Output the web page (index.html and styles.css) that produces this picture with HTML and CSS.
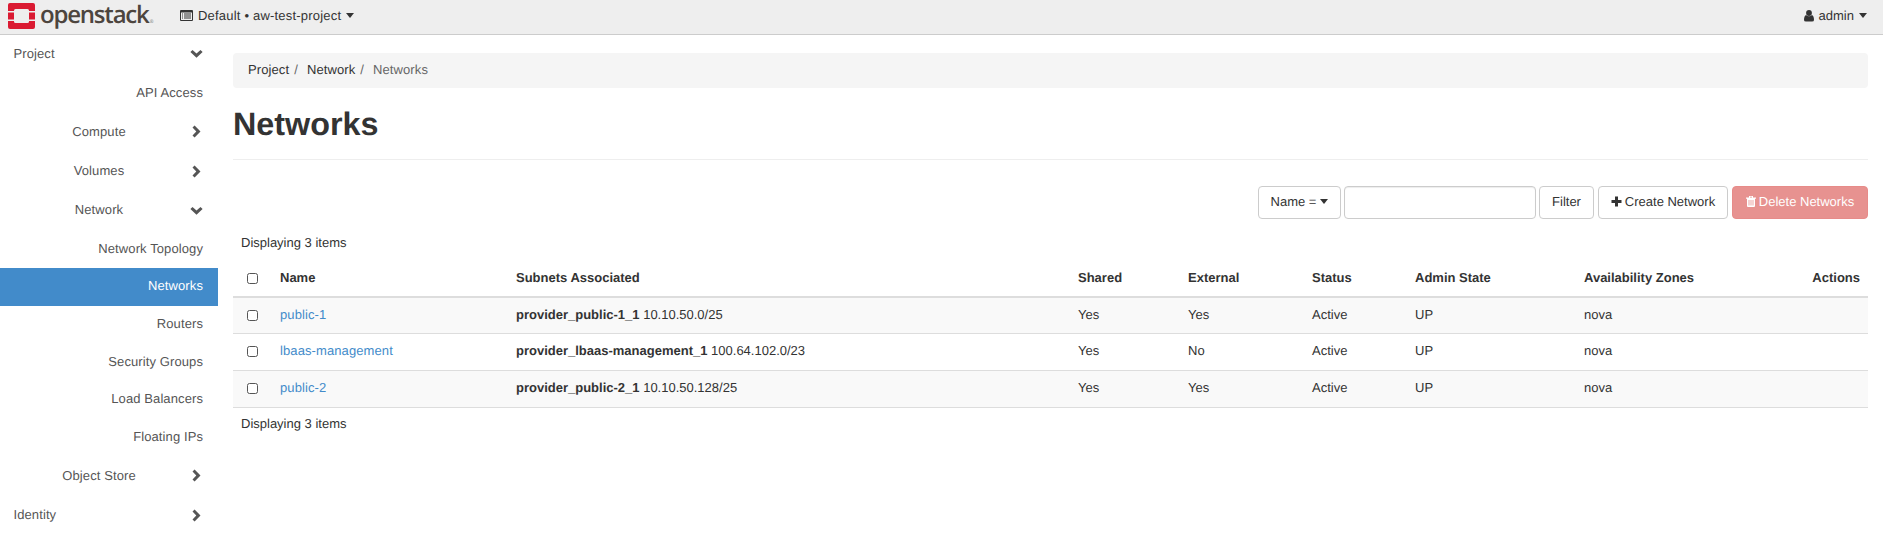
FILE: index.html
```html
<!DOCTYPE html>
<html lang="en">
<head>
<meta charset="utf-8">
<title>Networks - OpenStack Dashboard</title>
<link rel="stylesheet" href="styles.css">
</head>
<body>
<svg class="sprite" width="0" height="0">
  <symbol id="down" viewBox="0 0 13 13"><path d="M.4 5 2.500 2.900 6.500 6.600 10.500 2.900 12.600 5 6.500 10.800z"/></symbol>
  <symbol id="right" viewBox="0 0 13 13"><path d="M4.600.4 2.500 2.500 6.300 6.500 2.500 10.500 4.600 12.600 10.500 6.500z"/></symbol>
</svg>
<header class="topbar">
  <a class="brand">
    <svg class="brand-mark" width="27" height="26" viewBox="0 0 27 26" fill="#da1a32">
      <path d="M2 0H25Q27 0 27 2V8H21V7.500Q21 6 19.500 6H7.500Q6 6 6 7.500V8H0V2Q0 0 2 0z"/>
      <path d="M0 9.500H6V16.500H0zM21 9.500H27V16.500H21z"/>
      <path d="M0 18H6V18.500Q6 20 7.500 20H19.500Q21 20 21 18.500V18H27V24Q27 26 25 26H2Q0 26 0 24z"/>
    </svg>
    <span class="brand-name">openstack</span><span class="brand-dot">®</span>
  </a>
  <a class="context">
    <svg width="13" height="11" viewBox="0 0 13 11"><path fill="#333" fill-rule="evenodd" d="M1 0H12Q13 0 13 1V10Q13 11 12 11H1Q0 11 0 10V1Q0 0 1 0zM1 2.500V10H12V2.500zM2 3.500H3V4.500H2zM4 3.500H11V4.500H4zM2 5.500H3V6.500H2zM4 5.500H11V6.500H4zM2 7.500H3V8.500H2zM4 7.500H11V8.500H4z"/></svg>
    <span>Default • aw-test-project</span><i class="caret"></i>
  </a>
  <a class="user">
    <svg width="10" height="12" viewBox="0 0 10 12" fill="#333"><circle cx="5" cy="3" r="2.900"/><path d="M2 5Q5 7.600 8 5Q10 6 10 10Q10 11.500 8 11.500H2Q0 11.500 0 10Q0 6 2 5z"/></svg>
    <span>admin</span><i class="caret"></i>
  </a>
</header>
<div class="layout">
  <nav class="sidebar">
    <a class="item"><span>Project</span><svg class="chev"><use href="#down"/></svg></a>
    <a class="item right">API Access</a>
    <a class="item group"><span>Compute</span><svg class="chev"><use href="#right"/></svg></a>
    <a class="item group"><span>Volumes</span><svg class="chev"><use href="#right"/></svg></a>
    <a class="item group"><span>Network</span><svg class="chev"><use href="#down"/></svg></a>
    <div class="submenu">
      <a class="leaf">Network Topology</a>
      <a class="leaf active">Networks</a>
      <a class="leaf">Routers</a>
      <a class="leaf">Security Groups</a>
      <a class="leaf">Load Balancers</a>
      <a class="leaf">Floating IPs</a>
    </div>
    <a class="item group"><span>Object Store</span><svg class="chev"><use href="#right"/></svg></a>
    <a class="item"><span>Identity</span><svg class="chev"><use href="#right"/></svg></a>
  </nav>
  <main class="content">
    <div class="breadcrumb"><a>Project</a><i>/</i><a>Network</a><i>/</i><span>Networks</span></div>
    <h1>Networks</h1>
    <div class="actions">
      <button class="btn name">Name = <i class="caret"></i></button>
      <input class="search" type="text">
      <button class="btn filter">Filter</button>
      <button class="btn create"><svg width="11" height="11" viewBox="0 0 11 11"><path fill="#333" d="M4 .5H7V4H10.500V7H7V10.500H4V7H.5V4H4z"/></svg>Create Network</button>
      <button class="btn danger"><svg width="10" height="11" viewBox="0 0 10 11"><path fill="#fff" fill-rule="evenodd" d="M3 0H7V1.500H10V2.700H9V10Q9 11 8 11H2Q1 11 1 10V2.700H0V1.500H3zM4 .8V1.500H6V.8zM2.600 4V9.500H3.400V4zM4.600 4V9.500H5.400V4zM6.600 4V9.500H7.400V4z"/></svg>Delete Networks</button>
    </div>
    <p class="count">Displaying 3 items</p>
    <table>
      <colgroup><col class="c1"><col class="c2"><col class="c3"><col class="c4"><col class="c5"><col class="c6"><col class="c7"><col class="c8"><col></colgroup>
      <thead><tr><th><i class="check"></i></th><th>Name</th><th>Subnets Associated</th><th>Shared</th><th>External</th><th>Status</th><th>Admin State</th><th>Availability Zones</th><th class="last">Actions</th></tr></thead>
      <tbody>
        <tr><td><i class="check"></i></td><td><a>public-1</a></td><td><b>provider_public-1_1</b> 10.10.50.0/25</td><td>Yes</td><td>Yes</td><td>Active</td><td>UP</td><td>nova</td><td></td></tr>
        <tr><td><i class="check"></i></td><td><a>lbaas-management</a></td><td><b>provider_lbaas-management_1</b> 100.64.102.0/23</td><td>Yes</td><td>No</td><td>Active</td><td>UP</td><td>nova</td><td></td></tr>
        <tr><td><i class="check"></i></td><td><a>public-2</a></td><td><b>provider_public-2_1</b> 10.10.50.128/25</td><td>Yes</td><td>Yes</td><td>Active</td><td>UP</td><td>nova</td><td></td></tr>
      </tbody>
    </table>
    <p class="count foot">Displaying 3 items</p>
  </main>
</div>
</body>
</html>
```
FILE: styles.css
```css
* { box-sizing: border-box; }
body { margin: 0; background: #fff; color: #333; font: 13px/18px "Liberation Sans", Arial, sans-serif; text-rendering: geometricPrecision; }
i { font-style: normal; }
.sprite { display: block; height: 0; }
.topbar { display: flex; height: 35px; padding: 0 16px 0 8px; background: #eee; border-bottom: 1px solid #ccc; }
.brand { display: flex; width: 172px; padding-top: 3px; }
.brand-name { margin: -3px 0 0 5px; height: 34px; color: #4d453e; font: 600 24px/34px "Open Sans", sans-serif; letter-spacing: -1.200px; margin-top: -5px; }
.brand-dot { margin: 10px 0 0 1px; color: #777; font-size: 5px; }
.context, .user { display: flex; align-items: center; height: 32px; }
.context { letter-spacing: .2px; }
.context svg { margin: 0 5px 2px 0; }
.user { margin-left: auto; }
.user svg { margin: 0 5px 0 0; }
.caret { display: inline-block; width: 0; border: solid transparent; border-width: 5px 4px 0; border-top-color: #333; margin: 0 0 1px 5px; }
.layout { display: flex; }
.sidebar { width: 218px; flex: none; margin-top: -1px; color: #555; letter-spacing: .1px; }
.item { display: flex; align-items: center; justify-content: space-between; height: 39.200px; padding: 0 15px 0 13.500px; }
.right { justify-content: flex-end; }
.group { padding-left: 8px; }
.group span { flex: 1; text-align: center; }
.chev { width: 13px; height: 13px; fill: #555; }
.submenu { padding-top: 1px; }
.leaf { display: block; height: 37.560px; padding: 9px 15px 0 0; text-align: right; }
.active { background: #428bca; color: #fff; }
.content { flex: 1; padding: 18px 15px 0; }
.breadcrumb { height: 35px; padding: 8px 15px; background: #f5f5f5; border-radius: 4px; letter-spacing: .1px; }
.breadcrumb i { padding: 0 9px 0 5px; color: #666; }
.breadcrumb span { color: #666; }
h1 { height: 72px; margin: 0 0 26px; padding-top: 18px; border-bottom: 1px solid #eee; font-size: 32.300px; line-height: 37px; }
.actions { display: flex; justify-content: flex-end; height: 33px; }
.btn { display: flex; align-items: center; justify-content: center; height: 33px; padding: 0 0 1px; border: 1px solid #ccc; border-radius: 4px; background: #fff; color: #333; font: inherit; white-space: nowrap; text-rendering: inherit; }
.btn svg { margin: 0 3px 1px 0; }
.btn .caret { margin-left: 4px; }
.name { width: 83px; margin-right: 3px; }
.search { width: 192px; margin-right: 3px; border: 1px solid #ccc; border-radius: 4px; box-shadow: inset 0 1px 1px rgba(0,0,0,.075); }
.filter { width: 55px; margin-right: 4px; }
.create { width: 130px; margin-right: 4px; }
.danger { width: 136px; border-color: #e78b89; background: #e79290; color: #fff; }
.count { margin: 15px 0 0; padding-left: 8px; }
table { width: 1635px; margin-top: 9px; border-collapse: separate; border-spacing: 0; table-layout: fixed; }
th, td { height: 37px; padding: 0 8px 2px; text-align: left; border-bottom: 1px solid #ddd; white-space: nowrap; }
th { border-bottom-width: 2px; }
.last { text-align: right; }
tbody tr:nth-child(odd) { background: #f9f9f9; }
tbody tr:first-child td { height: 36px; }
td a { color: #428bca; letter-spacing: .1px; }
.check { display: block; width: 11px; height: 11px; margin: 1px 0 0 6px; border: 1px solid #555; border-radius: 2.500px; background: #fff; }
.c1 { width: 39px; }
.c2 { width: 236px; }
.c3 { width: 562px; }
.c4 { width: 110px; }
.c5 { width: 124px; }
.c6 { width: 103px; }
.c7 { width: 169px; }
.c8 { width: 159px; }
.foot { margin-top: 7px; }
```
